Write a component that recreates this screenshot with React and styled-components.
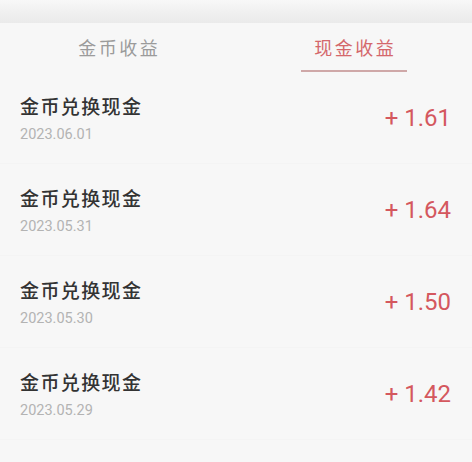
import React from "react";
import styled, { createGlobalStyle } from "styled-components";

const GlobalStyle = createGlobalStyle`
  html, body {
    margin: 0;
    padding: 0;
    background: #f7f7f7;
    overflow: hidden;
  }
  body {
    font-family: Roboto, "Noto Sans CJK SC", sans-serif;
  }
`;

const Page = styled.div`
  width: 472px;
  height: 462px;
  background: #f7f7f7;
  overflow: hidden;
`;

const HeaderEdge = styled.div`
  height: 23px;
  background: linear-gradient(#f8f8f8 0%, #f1f1f1 45%, #eaeaea 100%);
`;

const TabBar = styled.div`
  display: flex;
  height: 49px;
`;

const Tab = styled.div`
  flex: 1;
  display: flex;
  flex-direction: column;
  align-items: center;
`;

const TabLabel = styled.div`
  height: 47px;
  display: flex;
  align-items: center;
  padding-left: 2.5px;
  font-family: "Noto Sans CJK SC", sans-serif;
  font-size: 18px;
  letter-spacing: 2.5px;
  color: ${(p) => (p.active ? "#d4676b" : "#9b9b9b")};
`;

const Underline = styled.div`
  width: 106px;
  height: 2px;
  background: ${(p) => (p.active ? "#cfa8a8" : "transparent")};
`;

const Row = styled.div`
  height: 92px;
  display: flex;
  align-items: center;
  justify-content: space-between;
  padding: 0 21px 0 20px;
  border-bottom: 1px solid #f4f4f4;
  box-sizing: border-box;
`;

const Info = styled.div`
  display: flex;
  flex-direction: column;
  padding-top: 3px;
`;

const Title = styled.div`
  font-family: "Noto Sans CJK SC", sans-serif;
  font-size: 19px;
  font-weight: 500;
  line-height: 26px;
  letter-spacing: 1.4px;
  color: #333333;
`;

const DateText = styled.div`
  margin-top: 6px;
  font-family: Roboto, sans-serif;
  font-size: 14.5px;
  line-height: 20px;
  color: #b3b3b3;
`;

const Amount = styled.div`
  font-family: Roboto, sans-serif;
  font-size: 24px;
  color: #d4585e;
  white-space: pre;
`;

const records = [
  { date: "2023.06.01", amount: "1.61" },
  { date: "2023.05.31", amount: "1.64" },
  { date: "2023.05.30", amount: "1.50" },
  { date: "2023.05.29", amount: "1.42" },
];

const App = () => {
  return (
    <Page>
      <GlobalStyle />
      <HeaderEdge />
      <TabBar>
        <Tab>
          <TabLabel>金币收益</TabLabel>
          <Underline />
        </Tab>
        <Tab>
          <TabLabel active>现金收益</TabLabel>
          <Underline active />
        </Tab>
      </TabBar>
      {records.map((r) => (
        <Row key={r.date}>
          <Info>
            <Title>金币兑换现金</Title>
            <DateText>{r.date}</DateText>
          </Info>
          <Amount>+ {r.amount}</Amount>
        </Row>
      ))}
    </Page>
  );
};

export default App;
